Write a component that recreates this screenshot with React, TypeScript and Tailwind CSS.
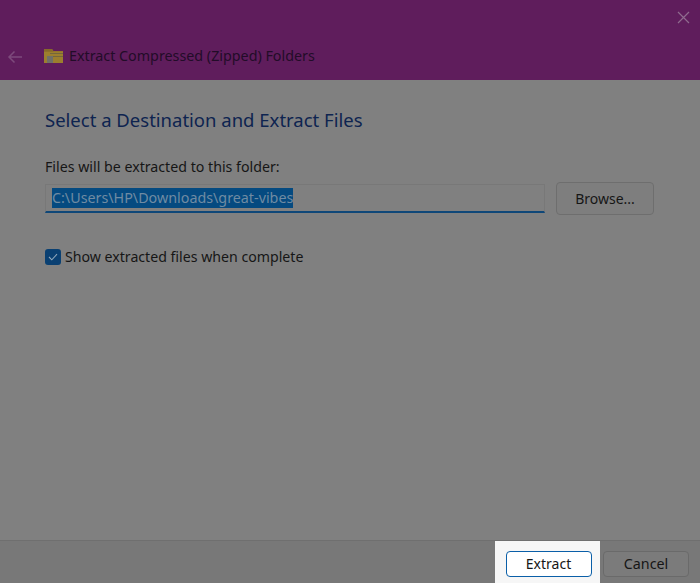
export default function App() {
  return (
    <div className="flex h-[583px] w-[700px] flex-col overflow-hidden bg-[#808080] font-['Noto_Sans',sans-serif] text-[#161616]">
      <header className="relative flex h-[80px] shrink-0 items-end bg-[#5f1d5c] pb-[14px] pl-[7px]">
        <svg className="absolute right-[10px] top-[11px]" width="13" height="13" viewBox="0 0 13 13" fill="none" stroke="#8f6a8e" strokeWidth="1.2">
          <path d="M1 1l11 11M12 1L1 12" />
        </svg>
        <svg className="mb-[2px]" width="16" height="14" viewBox="0 0 16 14" fill="none" stroke="#7d4a7c" strokeWidth="1.5">
          <path d="M15 7H2M7.5 1.5L2 7l5.5 5.5" />
        </svg>
        <svg className="mb-[3px] ml-[21px]" width="19" height="15" viewBox="0 0 19 15">
          <path d="M0 1h8l1.5 2H19V15H0z" fill="#94772a" />
          <path d="M0 1h8l1.5 2.5H0z" fill="#86692a" />
          <path d="M0 4h19v11H0z" fill="#9c7f2e" />
          <path d="M6 5h13v1H6zM6 8h13v1H6z" fill="#6a6040" opacity="0.8" />
          <path d="M3 8h6v7H3z" fill="#6f7068" />
        </svg>
        <span className="ml-[6px] text-[14.3px] leading-[20px] text-[#220c28]">Extract Compressed (Zipped) Folders</span>
      </header>

      <main className="flex flex-1 flex-col pl-[45px] pt-[28px]">
        <h1 className="text-[18.5px] font-normal leading-[24px] text-[#0e2450]">Select a Destination and Extract Files</h1>
        <p className="mt-[25px] text-[14.2px] leading-[20px]">Files will be extracted to this folder:</p>
        <div className="mt-[7px] flex items-start gap-[11px]">
          <div className="flex h-[29px] w-[500px] items-center border border-b-2 border-[#787878] border-b-[#0f4778] pb-[1px] pl-[6px]">
            <span className="bg-[#054a80] text-[14.3px] leading-[20px] text-[#6f8ba3]">C:\Users\HP\Downloads\great-vibes</span>
          </div>
          <button className="mt-[-2px] h-[33px] w-[98px] rounded-[4px] border border-[#6e6e6e] bg-[#7e7e7e] text-[14px]">Browse...</button>
        </div>
        <label className="mt-[32px] flex items-center gap-[4px]">
          <span className="flex h-[16px] w-[16px] items-center justify-center rounded-[3px] bg-[#0a4072]">
            <svg width="10" height="8" viewBox="0 0 10 8" fill="none" stroke="#8fa6ba" strokeWidth="1.1">
              <path d="M1 4l2.8 2.8L9 1.2" />
            </svg>
          </span>
          <span className="text-[14.15px] leading-[20px]">Show extracted files when complete</span>
        </label>
      </main>

      <footer className="flex h-[43px] shrink-0 justify-end border-t border-[#6f6f6f] bg-[#787878]">
        <div className="flex h-[42px] w-[105px] items-start justify-center bg-[#f6f6f6] pl-[2px] pt-[10px]">
          <button className="h-[26px] w-[86px] rounded-[4px] border border-[#0a5fa8] bg-white text-[14px] leading-[20px]">Extract</button>
        </div>
        <div className="pl-[3px] pr-[11px] pt-[10px]">
          <button className="h-[26px] w-[86px] rounded-[4px] border border-[#6a6a6a] bg-[#7b7b7b] text-[14.3px] leading-[20px]">Cancel</button>
        </div>
      </footer>
    </div>
  );
}
